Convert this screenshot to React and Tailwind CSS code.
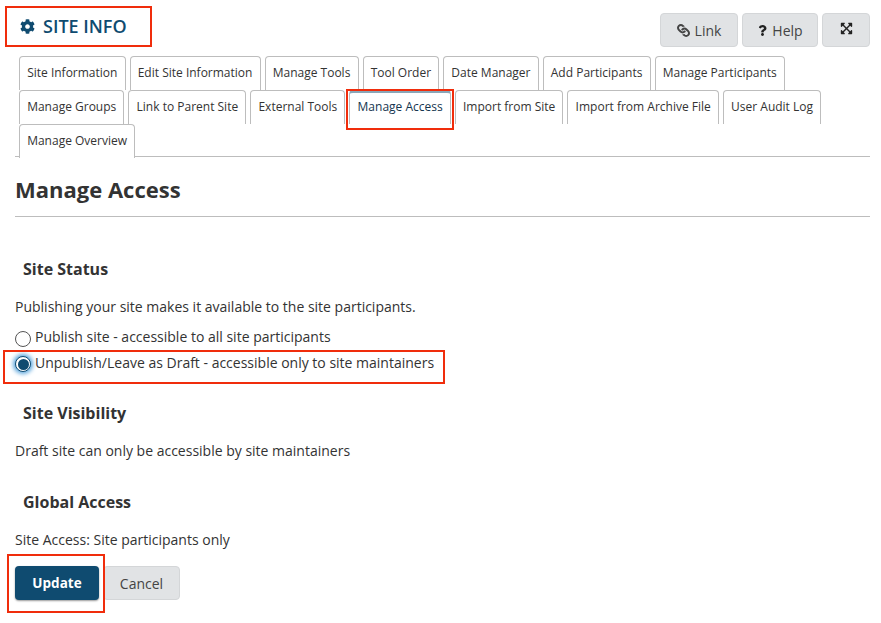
import React from "react";
import { FaCog, FaLink, FaQuestion, FaExpandArrowsAlt } from "react-icons/fa";

const font = { fontFamily: '"Open Sans", sans-serif' };

function Tab({ children, active }) {
  return (
    <div
      className={
        "h-[34px] mr-1 px-[7.15px] rounded-t border border-b-0 border-[#bdbdbd] text-[12px] leading-[16px] whitespace-nowrap bg-white " +
        (active ? "border-t-[3px] border-t-[#8aa6b8] pt-[6px] text-[#15354f]" : "pt-[8px] text-[#333]")
      }
    >
      {children}
    </div>
  );
}

function Btn({ children, className = "" }) {
  return (
    <div className={"flex items-center justify-center h-[34px] rounded bg-[#e1e3e5] border border-[#d4d6d8] text-[14px] text-[#444] " + className}>
      {children}
    </div>
  );
}

function Mark({ className }) {
  return <div className={"absolute border-2 border-[#f02d0c] pointer-events-none " + className} />;
}

export default function App() {
  const rows = [
    ["Site Information", "Edit Site Information", "Manage Tools", "Tool Order", "Date Manager", "Add Participants", "Manage Participants"],
    ["Manage Groups", "Link to Parent Site", "External Tools", "Manage Access", "Import from Site", "Import from Archive File", "User Audit Log"],
    ["Manage Overview"],
  ];
  return (
    <div className="relative w-[881px] h-[623px] bg-white overflow-hidden pl-[15px] pr-[11px] text-[#333]" style={font}>
      <Mark className="left-[5px] top-[6px] w-[147px] h-[41px]" />
      <Mark className="left-[346px] top-[89px] w-[108px] h-[41px]" />
      <Mark className="left-[3px] top-[350px] w-[442px] h-[34px]" />
      <Mark className="left-[7px] top-[554px] w-[98px] h-[59px]" />

      <div className="flex justify-between h-[56px]">
        <div className="flex items-center gap-[8px] pl-[5px] h-[52px] text-[#0f4b70]">
          <FaCog className="text-[15px]" />
          <span className="text-[18px] font-semibold leading-[24px]">SITE INFO</span>
        </div>
        <div className="flex gap-[4px] pt-[13px]">
          <Btn className="w-[78px] gap-[5px]"><FaLink className="text-[13px] rotate-90" />Link</Btn>
          <Btn className="w-[76px] gap-[4px]"><FaQuestion className="text-[11px] text-[#222]" />Help</Btn>
          <Btn className="w-[48px] pb-[3px]"><FaExpandArrowsAlt className="text-[13px] text-[#222]" /></Btn>
        </div>
      </div>

      <div className="pl-[4px] h-[101px] border-b border-[#bdbdbd]">
        {rows.map((r, i) => (
          <div key={i} className={"flex " + (i === 2 ? "h-[32px]" : "h-[34px]")}>
            {r.map((t) => (
              <Tab key={t} active={t === "Manage Access"}>{t}</Tab>
            ))}
          </div>
        ))}
      </div>

      <h1 className="mt-[18px] text-[22px] leading-[28px] font-bold text-[#333]">Manage Access</h1>
      <div className="mt-[13px] border-t border-[#bdbdbd]" />

      <h2 className="mt-[41px] ml-2 text-[16px] leading-[22px] font-bold">Site Status</h2>
      <p className="mt-[17px] text-[14px] leading-[20px]">Publishing your site makes it available to the site participants.</p>

      <div className="mt-[9px] flex items-center h-[24px] text-[14px]">
        <span className="w-4 h-4 rounded-full border border-[#555] bg-white shrink-0 mt-[1px]" />
        <span className="ml-1 -mt-[4px]">Publish site - accessible to all site participants</span>
      </div>
      <div className="mt-[1px] flex items-center h-[26px] text-[14px]">
        <span className="w-4 h-4 rounded-full border border-[#0f4b70] bg-white shrink-0 flex items-center justify-center shadow-[0_0_4px_2px_#5aa5dc]">
          <span className="w-[11px] h-[11px] rounded-full bg-[#0f4b70]" />
        </span>
        <span className="ml-1 -mt-[3px]">Unpublish/Leave as Draft - accessible only to site maintainers</span>
      </div>

      <h2 className="mt-[25px] ml-2 text-[16px] leading-[22px] font-bold">Site Visibility</h2>
      <p className="mt-[17px] text-[14px] leading-[20px]">Draft site can only be accessible by site maintainers</p>

      <h2 className="mt-[30px] ml-2 text-[16px] leading-[22px] font-bold">Global Access</h2>
      <p className="mt-[17px] text-[14px] leading-[20px]">Site Access: Site participants only</p>

      <div className="mt-[16px] flex gap-[5px]">
        <div className="flex items-center justify-center w-[84px] h-[34px] rounded bg-[#0f4b70] text-white text-[13.5px] font-bold shadow-[0_1px_2px_rgba(0,0,0,0.4)]">Update</div>
        <Btn className="w-[77px] -ml-[1px]">Cancel</Btn>
      </div>
    </div>
  );
}
